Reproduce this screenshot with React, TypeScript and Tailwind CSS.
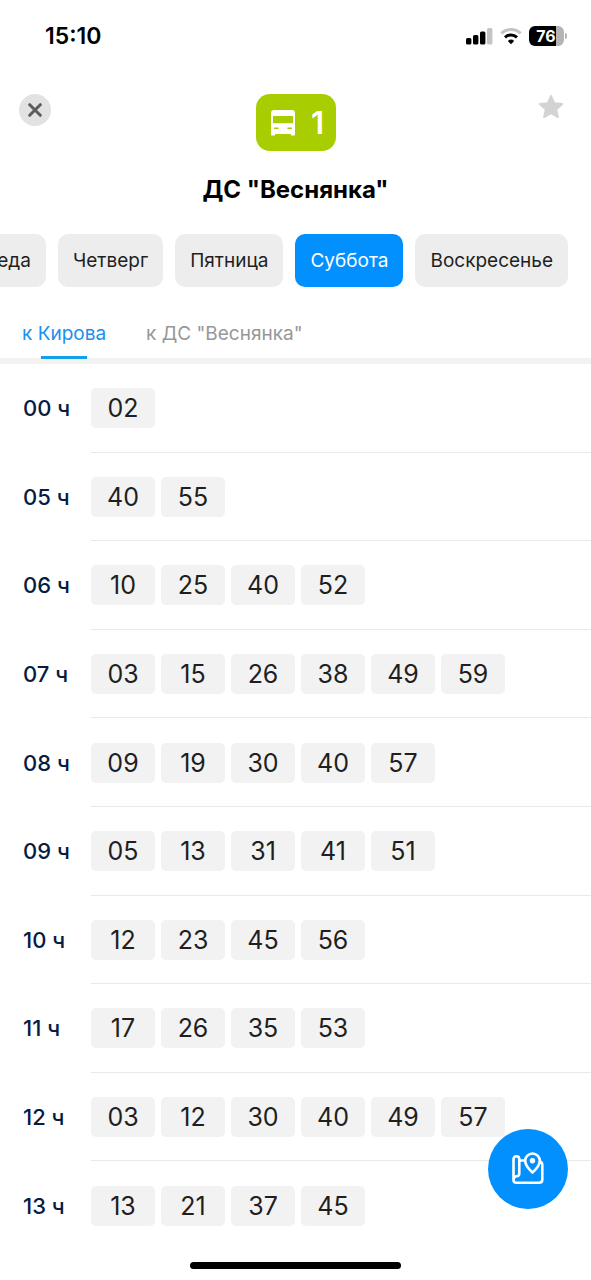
const days = ["Среда", "Четверг", "Пятница", "Суббота", "Воскресенье"];

const timetable: { hour: string; minutes: string[] }[] = [
  { hour: "00", minutes: ["02"] },
  { hour: "05", minutes: ["40", "55"] },
  { hour: "06", minutes: ["10", "25", "40", "52"] },
  { hour: "07", minutes: ["03", "15", "26", "38", "49", "59"] },
  { hour: "08", minutes: ["09", "19", "30", "40", "57"] },
  { hour: "09", minutes: ["05", "13", "31", "41", "51"] },
  { hour: "10", minutes: ["12", "23", "45", "56"] },
  { hour: "11", minutes: ["17", "26", "35", "53"] },
  { hour: "12", minutes: ["03", "12", "30", "40", "49", "57"] },
  { hour: "13", minutes: ["13", "21", "37", "45"] },
];

function SignalIcon() {
  return (
    <svg width="28" height="18" viewBox="0 0 28 18" aria-hidden="true">
      <rect x="0" y="11" width="5.4" height="6.4" rx="1.5" />
      <rect x="7" y="8" width="5.4" height="9.4" rx="1.5" />
      <rect x="14" y="4.5" width="5.4" height="12.9" rx="1.5" />
      <rect x="21" y="1" width="5.4" height="16.4" rx="1.5" fill="#c4c4c4" />
    </svg>
  );
}

function WifiIcon() {
  return (
    <svg width="22" height="18" viewBox="0 0 22 18" fill="none" strokeWidth="3" aria-hidden="true">
      <path d="M1.300 6.300A14 14 0 0 1 20.700 6.300" stroke="#c4c4c4" />
      <path d="M5 10.300A8.800 8.800 0 0 1 17 10.300" stroke="#000" />
      <path d="M11 17.300L7.800 14A4.700 4.700 0 0 1 14.200 14Z" fill="#000" />
    </svg>
  );
}

function StatusBar() {
  return (
    <div className="flex h-[72px] items-center justify-between pr-6 pl-[45px]">
      <span className="text-[23px] leading-7 font-semibold">15:10</span>
      <div className="flex items-center gap-[6px]">
        <SignalIcon />
        <WifiIcon />
        <div className="flex items-center gap-px pl-px">
          <div className="flex h-[20px] w-[35px] items-center justify-center rounded-[6px] bg-linear-to-r from-black from-76% to-[#b4b4b4] to-76% pr-px text-[16px] leading-5 font-bold text-white">
            76
          </div>
          <div className="h-[6px] w-[2px] rounded-r-full bg-[#b4b4b4]" />
        </div>
      </div>
    </div>
  );
}

function BusIcon() {
  return (
    <svg width="24" height="26" viewBox="0 0 24 26" aria-hidden="true">
      <rect x="0" y="0" width="24" height="24" rx="3.2" fill="#fff" />
      <rect x="0" y="19" width="4.2" height="6.6" rx="1.2" fill="#fff" />
      <rect x="19.8" y="19" width="4.2" height="6.6" rx="1.2" fill="#fff" />
      <rect x="2" y="6" width="20" height="7.2" fill="#a8cd00" />
      <rect x="3" y="17.6" width="4.6" height="1.4" rx="0.5" fill="#a8cd00" />
      <rect x="16.4" y="17.6" width="4.6" height="1.4" rx="0.5" fill="#a8cd00" />
    </svg>
  );
}

function CloseIcon() {
  return (
    <svg width="14" height="14" viewBox="0 0 14 14" aria-hidden="true">
      <path d="M1.700 1.700L12.300 12.300M12.300 1.700L1.700 12.300" stroke="#5c5c5c" strokeWidth="3" strokeLinecap="round" />
    </svg>
  );
}

function StarIcon() {
  return (
    <svg width="26" height="26" viewBox="0 0 26 26" aria-hidden="true">
      <path
        d="M13 1.800L16.300 9.200L24.300 10L18.300 15.400L20 23.300L13 19.200L6 23.300L7.700 15.400L1.700 10L9.700 9.200Z"
        fill="#d3d3d3"
        stroke="#d3d3d3"
        strokeWidth="1.8"
        strokeLinejoin="round"
      />
    </svg>
  );
}

function MapIcon() {
  return (
    <svg width="32" height="34" viewBox="0 0 32 34" fill="none" stroke="#fff" strokeWidth="2.6" strokeLinecap="round" strokeLinejoin="round" aria-hidden="true">
      <path d="M1.500 28V7.300Q1.500 4.300 4.500 4.300Q7.300 4.300 7.300 7.300V21.500Q7.300 24.300 4.500 24.300Q1.500 24.700 1.500 28Q1.500 30.800 4.500 30.800H27Q30.300 30.800 30.300 27.500V13Q30.300 10.500 28 9.500" />
      <path d="M7.500 8.500H12.500" />
      <path d="M20.500 20.500Q13.200 14 13.200 8.800A7.300 7.300 0 0 1 27.800 8.800Q27.800 14 20.500 20.500Z" />
      <circle cx="20.5" cy="8.7" r="2.7" fill="#fff" stroke="none" />
    </svg>
  );
}

export default function App() {
  return (
    <div className="flex min-h-screen flex-col bg-white font-['Inter','Liberation_Sans',sans-serif] text-black">
      <StatusBar />

      <header className="flex items-start justify-between px-[19px] pt-[22px]">
        <div className="flex flex-1">
          <button type="button" aria-label="Закрыть" className="flex size-8 items-center justify-center rounded-full bg-[#e2e2e2]">
            <CloseIcon />
          </button>
        </div>
        <div className="flex flex-col items-center">
          <div className="flex h-[57px] w-20 items-center justify-center gap-4 rounded-[14px] bg-[#a8cd00] pl-1 text-[31px] leading-8 font-semibold text-white">
            <BusIcon />
            <span>1</span>
          </div>
          <h1 className="mt-[23px] text-[24px] leading-8 font-bold">ДС "Веснянка"</h1>
        </div>
        <div className="flex flex-1 justify-end">
          <button type="button" aria-label="В избранное" className="mr-2">
            <StarIcon />
          </button>
        </div>
      </header>

      <nav aria-label="День недели" className="mt-7 flex justify-end gap-3 overflow-hidden pr-[23px]">
        {days.map((day) => (
          <button
            key={day}
            type="button"
            aria-pressed={day === "Суббота"}
            className={
              day === "Суббота"
                ? "h-[53px] shrink-0 rounded-[10px] bg-[#0390ff] px-[15px] text-[19px] leading-6 text-white"
                : "h-[53px] shrink-0 rounded-[10px] bg-[#ededed] px-[15px] text-[19px] leading-6 text-[#1f1f1f]"
            }
          >
            {day}
          </button>
        ))}
      </nav>

      <div role="tablist" className="mt-[33px] flex gap-10 border-b-[6px] border-[#f2f2f2] pl-[22px] text-[19px] leading-7">
        <button type="button" role="tab" aria-selected="true" className="-mb-px flex flex-col items-center gap-2 text-[#1b8ff0]">
          к Кирова
          <span className="h-[3px] w-[46px] bg-[#12a0e8]" />
        </button>
        <button type="button" role="tab" aria-selected="false" className="self-start text-[#979797]">
          к ДС "Веснянка"
        </button>
      </div>

      <table className="grid flex-1">
        <tbody className="grid auto-rows-fr">
          {timetable.map(({ hour, minutes }) => (
            <tr key={hour} className="group flex min-h-20">
              <th scope="row" className="flex w-[91px] shrink-0 items-center pl-[23px] text-left text-[22px] leading-7 font-medium text-[#061c42]">
                {hour} ч
              </th>
              <td className="flex flex-1 flex-wrap items-center gap-[6px] border-b border-[#e9e9e9] pt-px group-last:border-transparent">
                {minutes.map((minute) => (
                  <span key={minute} className="flex h-10 w-16 items-center justify-center rounded-[5px] bg-[#f2f2f2] text-[25px] leading-8 text-[#1f1f1f]">
                    {minute}
                  </span>
                ))}
              </td>
            </tr>
          ))}
        </tbody>
      </table>

      <footer className="flex h-[30px] shrink-0 justify-center pt-3">
        <div className="h-[7px] w-[211px] rounded-full bg-black" />
      </footer>

      <button type="button" aria-label="Показать на карте" className="fixed right-[23px] bottom-[71px] flex size-20 items-center justify-center rounded-full bg-[#0390ff]">
        <MapIcon />
      </button>
    </div>
  );
}
